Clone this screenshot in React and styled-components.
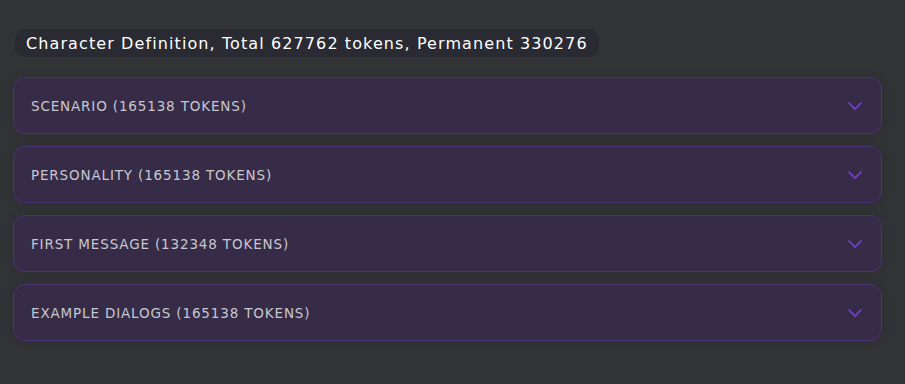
import React from "react";
import styled, { createGlobalStyle } from "styled-components";

const Global = createGlobalStyle`
  html, body { margin: 0; padding: 0; background: #323337; }
  body { font-family: "DejaVu Sans", "Liberation Sans", sans-serif; }
`;

const Page = styled.div`
  width: 905px;
  height: 384px;
  box-sizing: border-box;
  padding: 29px 23px 0 13px;
  display: flex;
  flex-direction: column;
  background: #323337;
`;

const Title = styled.div`
  align-self: flex-start;
  margin-left: 2px;
  height: 28px;
  display: flex;
  align-items: center;
  padding: 0 11px;
  background: #2a2a32;
  border-radius: 10px;
  color: #ffffff;
  font-size: 16px;
  letter-spacing: 1.1px;
  white-space: nowrap;
`;

const List = styled.div`
  margin-top: 20px;
  display: flex;
  flex-direction: column;
  gap: 12px;
`;

const Card = styled.div`
  height: 57px;
  box-sizing: border-box;
  border: 1px solid #4a3474;
  border-radius: 12px;
  background: #362c47;
  box-shadow: 0 0 10px rgba(0, 0, 0, 0.12);
  display: flex;
  align-items: center;
  justify-content: space-between;
  padding: 0 18px 0 17px;
`;

const Label = styled.span`
  color: #c9c6cf;
  font-size: 13.5px;
  letter-spacing: 0.85px;
  text-transform: uppercase;
`;

const Chevron = () => (
  <svg width="16" height="10" viewBox="0 0 16 10" fill="none">
    <path d="M1.5 1.5 L8 8 L14.5 1.5" stroke="#7a3fd0" strokeWidth="1.6" />
  </svg>
);

const items = [
  "Scenario (165138 tokens)",
  "Personality (165138 tokens)",
  "First message (132348 tokens)",
  "Example dialogs (165138 tokens)",
];

export default function App() {
  return (
    <Page>
      <Global />
      <Title>Character Definition, Total 627762 tokens, Permanent 330276</Title>
      <List>
        {items.map((t) => (
          <Card key={t}>
            <Label>{t}</Label>
            <Chevron />
          </Card>
        ))}
      </List>
    </Page>
  );
}
